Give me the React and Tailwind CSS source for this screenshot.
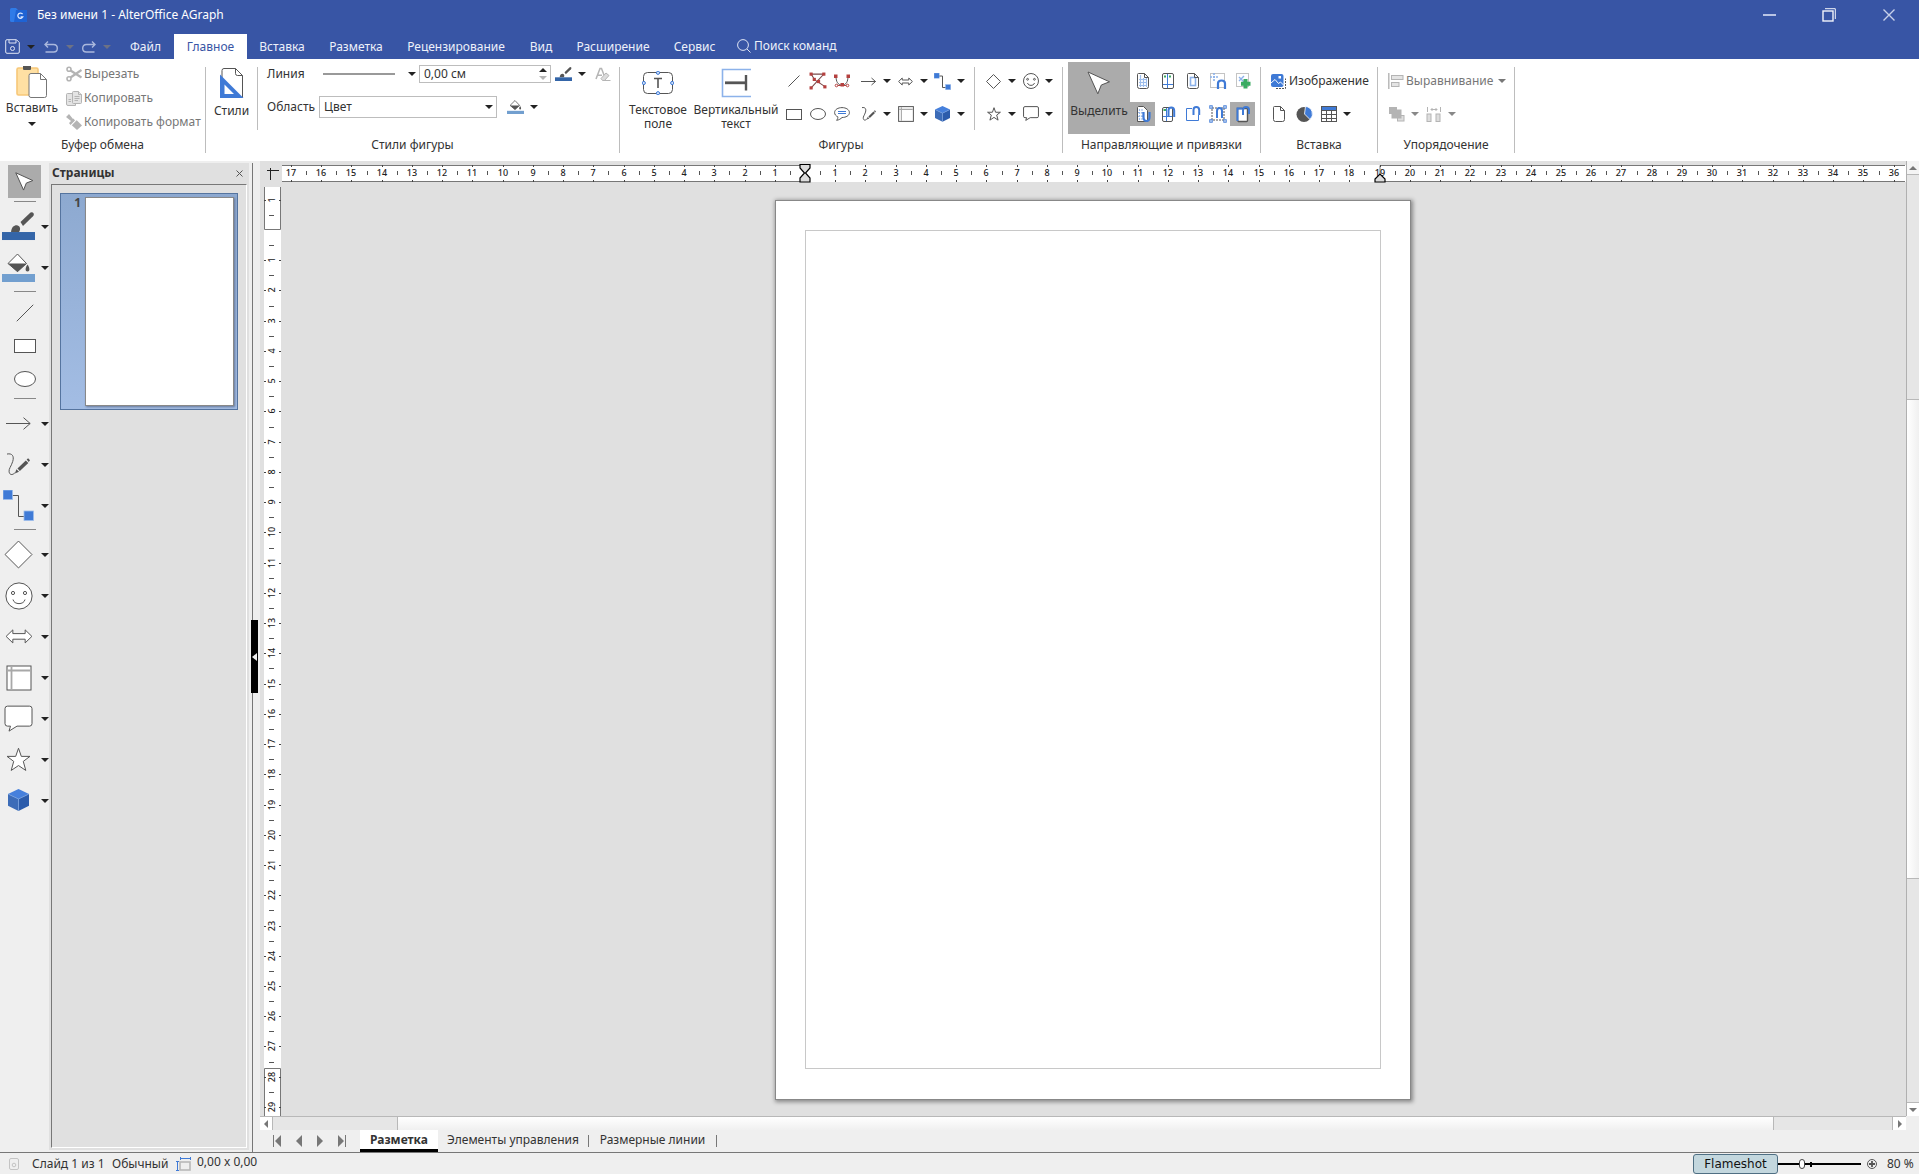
import React from "react";

const D = "#555555";
const B = "#3f7ad6";
const R = "#b5403f";

/* ---------- small helpers ---------- */

function Svg({ w = 18, h = w, vb, children }) {
  return (
    <svg
      width={w}
      height={h}
      viewBox={vb || `0 0 ${w} ${h}`}
      fill="none"
      stroke={D}
      strokeWidth="1"
      className="block shrink-0"
      aria-hidden="true"
    >
      {children}
    </svg>
  );
}

function Caret({ tone = "#222222" }) {
  return (
    <Svg w={8} h={4}>
      <path d="M0 0H8L4 4Z" fill={tone} stroke="none" />
    </Svg>
  );
}

function Drop({ label, tone, className = "w-2 h-6" }) {
  return (
    <button type="button" aria-label={label} className={`flex items-center justify-center shrink-0 ${className}`}>
      <Caret tone={tone} />
    </button>
  );
}

function IconBtn({ label, className = "w-6 h-6", children }) {
  return (
    <button type="button" aria-label={label} className={`flex items-center justify-center shrink-0 ${className}`}>
      {children}
    </button>
  );
}

function Split({ label, children, tone }) {
  return (
    <div className="flex w-[37px] items-center">
      <IconBtn label={label} className="h-6 w-[29px]">{children}</IconBtn>
      <Drop label={`${label}: ещё`} tone={tone} />
    </div>
  );
}

/* ---------- icons ---------- */

const LineIcon = ({ s = 12 }) => (
  <Svg w={s} vb="0 0 12 12"><path d="M.5 11.5 11.5.5" strokeWidth={12 / s} /></Svg>
);
const Polygon = () => (
  <Svg w={18} vb="1 1 17 17">
    <path d="M3 3H15L3 16M3 3 6.5 8.5 16.5 15" stroke="#7a4a4a" />
    {[[3, 3], [15, 3], [6, 8], [10, 10], [3, 16], [16, 15]].map(([x, y]) => (
      <rect key={`${x}-${y}`} x={x - 1.5} y={y - 1.5} width="3" height="3" fill={R} stroke="none" />
    ))}
  </Svg>
);
const Curve = () => (
  <Svg w={18}>
    <path d="M3 4C3 10 5 13 9 13S15 10 15 4" />
    <path d="M4 13.5H14" stroke={R} />
    <g fill={R} stroke="none">
      <rect x="1" y="2.5" width="3.5" height="3.5" />
      <rect x="13.5" y="2.5" width="3.5" height="3.5" />
      <rect x="7.5" y="11" width="3.5" height="3.5" />
    </g>
    <circle cx="3.5" cy="13.5" r="1.3" fill="#fff" stroke={R} />
    <circle cx="14.5" cy="13.5" r="1.3" fill="#fff" stroke={R} />
  </Svg>
);
const Arrow = ({ s = 15 }) => (
  <Svg w={s} h={s * 0.6} vb="0 0 15 9"><path d="M0 4.5H14.5M10.5 1 14.5 4.5 10.5 8" strokeWidth={15 / s} /></Svg>
);
const DoubleArrow = ({ s = 15 }) => (
  <Svg w={s} h={s * 0.6} vb="0 0 15 9">
    <path d="M.6 4.5 4.2 1V3H10.8V1L14.4 4.5 10.8 8V6H4.2V8Z" fill="#fff" strokeWidth={15 / s} />
  </Svg>
);
const Connector = ({ s = 17 }) => (
  <Svg w={s} vb="0 0 31 31">
    <path d="M6 5.5H15.5V26.5H24" strokeWidth={31 / s} />
    <rect x="0" y="0" width="9.5" height="9.5" fill={B} stroke="#9dbdec" strokeWidth=".8" />
    <rect x="21" y="21" width="9.5" height="9.5" fill={B} stroke="#9dbdec" strokeWidth=".8" />
  </Svg>
);
const Rect = ({ w = 16, h = 11 }) => (
  <Svg w={w} h={h}><rect x=".5" y=".5" width={w - 1} height={h - 1} fill="#fff" /></Svg>
);
const Ellipse = ({ w = 16, h = 12 }) => (
  <Svg w={w} h={h}><ellipse cx={w / 2} cy={h / 2} rx={w / 2 - 0.5} ry={h / 2 - 0.5} fill="#fff" /></Svg>
);
const Bubble = () => (
  <Svg w={16} h={14}>
    <path d="M8 .6C12 .6 15.4 2.6 15.4 5.6S12 10.5 8 10.5C6.8 11.8 5 13 2.6 13.3 3.6 12 4 11 3.8 9.8 1.8 8.9.6 7.4.6 5.6.6 2.6 4 .6 8 .6Z" />
    <path d="M4 4.5H12M4 6.5H12" stroke={B} />
  </Svg>
);
const FreePen = ({ s = 14 }) => (
  <Svg w={s} h={s} vb="0 0 22 22">
    <path d="M0 1C5 0 7 3 5.5 8 4 13 1.5 15 2 18 2.5 21 5 21.5 7.5 19" strokeWidth={22 / s} />
    <path d="M7.5 19.5 9 15.5 11.5 18ZM10 14.8 18 7.2 20.4 9.5 12.3 17.2ZM18.8 6.2 20.2 5 22 7 20.8 8.6Z" fill={D} stroke="none" />
  </Svg>
);
const TableFrame = ({ s = 16 }) => (
  <Svg w={s} vb="0 0 26 26">
    <rect x="1" y="1" width="24" height="24" fill="#fff" strokeWidth={26 / s} />
    <path d="M5.5 2V24M2 5.5H24" stroke="#a8a8a8" strokeWidth="1.8" />
  </Svg>
);
const Cube = ({ s = 15 }) => (
  <Svg w={s} h={s * 1.05} vb="0 0 20 21">
    <g stroke="none">
      <path d="M10 0 20 4.8 10 9.5 0 4.8Z" fill="#4680dc" />
      <path d="M0 4.8 10 9.5V21L0 16Z" fill="#3c6cb8" />
      <path d="M20 4.8 10 9.5V21L20 16Z" fill="#2c5cab" />
    </g>
    <path d="M.5 5 10 9.5 19.5 5M10 9.5V20.5" stroke="#7ba5e4" strokeWidth=".7" />
  </Svg>
);
const Diamond = ({ s = 15 }) => (
  <Svg w={s} vb="0 0 28 28"><path d="M14 1 27 14 14 27 1 14Z" fill="#fff" strokeWidth={28 / s} /></Svg>
);
const Smile = ({ s = 16 }) => (
  <Svg w={s} vb="0 0 28 28">
    <g strokeWidth={28 / s}>
      <circle cx="14" cy="14" r="13.1" fill="#fff" />
      <circle cx="8" cy="11" r="1.6" />
      <circle cx="20" cy="11" r="1.6" />
      <path d="M8 17.5C9 23 19 23 20 17.5" />
    </g>
  </Svg>
);
const Star = ({ s = 14 }) => (
  <Svg w={s} vb="0 0 24 24">
    <path d="M12 1.2 14.7 9H23L16.6 13.8 19 22.5 12 17.8 5 22.5 7.4 13.8 1 9H9.3Z" fill="#fff" strokeWidth={24 / s} />
  </Svg>
);
const Callout = ({ s = 16 }) => (
  <Svg w={s} h={s * 0.94} vb="0 0 29 27">
    <path d="M3.5 1H25.5Q28 1 28 3.5V18.5Q28 21 25.5 21H13L5 26 6.5 21H3.5Q1 21 1 18.5V3.5Q1 1 3.5 1Z" fill="#fff" strokeWidth={29 / s} />
  </Svg>
);
const Cursor = ({ s = 24 }) => (
  <Svg w={s} vb="0 0 24 24"><path d="M1 1 22.5 10.8 14.3 14 10.8 22.8Z" fill="#fff" strokeWidth={24 / s} /></Svg>
);
const Brush = ({ s = 33 }) => (
  <Svg w={s} h={s * 0.85} vb="0 0 33 28">
    <g stroke="none">
      <path d="M18.5 10 28.5.5Q30.5-.5 31.5 1.2 32.3 2.8 31 4.2L21 14Z" fill={D} />
      <path d="M9 20C9.5 15 12 13 15 13.2 18.5 14 18.8 17.5 17 20Z" fill={D} />
      <rect y="20" width="33" height="8" fill="#3465a8" />
    </g>
  </Svg>
);
const Bucket = ({ s = 33 }) => (
  <Svg w={s} h={s * 0.88} vb="0 0 33 29">
    <path d="M6 10.5 15.5 1 24.5 10.5 15.5 18.5Z" fill="#fff" strokeWidth={Math.min(33 / s, 1.5)} />
    <path d="M6 10.5H24.5L15.5 19Z" fill={D} stroke="none" />
    <path d="M25.5 11.5C28 15 28 18.5 25.5 18.5S23 15 25.5 11.5Z" fill={D} stroke="none" />
    <rect y="21" width="33" height="8" fill="#729fcf" stroke="none" />
  </Svg>
);
const Eraser = () => (
  <Svg w={16} h={15} vb="0 0 16 15">
    <path d="M1 12 5 1.5H6.5L9 8M2.5 8.2H7" stroke="#b5b5b5" strokeWidth="1.5" />
    <path d="M6 11.5 11 6 14 8.5 9.5 13.5H7.5ZM9 13.5H15.5" stroke="#b5b5b5" fill="#dcdcdc" />
  </Svg>
);

/* page-shaped glyphs */
const Sheet = ({ children }) => (
  <Svg w={18} h={18}>
    <path d="M4.5 1.5H10.5L14.5 5.5V14.5Q14.5 16.5 12.5 16.5H5.5Q3.5 16.5 3.5 14.5V2.5Q3.5 1.5 4.5 1.5Z" fill="#fff" />
    {children}
    <path d="M10.5 1.5V5.5H14.5" />
  </Svg>
);
const GridIcon = () => (
  <Sheet><path d="M5 7.5H13M5 10.5H13M5 13.5H13M6.5 3V15M9.5 6V15M12.5 6V15" stroke="#9dbdec" strokeWidth="1.2" /></Sheet>
);
const GuideIcon = () => (
  <Svg w={18}>
    <rect x="3.5" y="1.5" width="11" height="15" rx="1.5" fill="#fff" />
    <path d="M8.5 2V16M4 12.5H14" stroke={B} />
    <path d="M5 4.5H7M10 4.5H12" stroke="#3cab63" strokeWidth="2" />
  </Svg>
);
const FrameIcon = () => (
  <Sheet><rect x="6.5" y="5.5" width="5" height="8" stroke="#8cb2ea" strokeWidth="1.6" /></Sheet>
);
const SnapMove = () => (
  <Svg w={18}>
    <rect x="1.5" y="1.5" width="14" height="14" stroke="#c4c4c4" fill="#fff" />
    <path d="M5 1V9M1 5H9" stroke="#8cb2ea" strokeWidth="1.6" strokeDasharray="2 1" />
    <path d="M9 17V11.5Q9 8.5 12.5 8.5T16 11.5V17" stroke={B} strokeWidth="2.2" />
  </Svg>
);
const AddSnap = () => (
  <Svg w={18}>
    <rect x="2.5" y="1.5" width="12" height="13" stroke="#c4c4c4" fill="#fff" />
    <path d="M5 5 10 10M10 4 5 9" stroke="#8cb2ea" strokeWidth="1.4" />
    <path d="M11.5 7V16.5M7 11.8H16.5" stroke="#3cab63" strokeWidth="4" />
  </Svg>
);
const SnapGrid = () => (
  <Svg w={18}>
    <path d="M4.5 1.5H9.5L13.5 5.5V16.5H3.5V2.5Z" fill="#fff" />
    <path d="M5.5 4V15M8 4V15M4 7.5H10M4 11.5H9" stroke="#9dbdec" strokeWidth="1.2" strokeDasharray="2 1" />
    <path d="M9.5 7V12Q9.5 16 12.5 16T15.5 12V7" stroke={B} strokeWidth="2.2" />
  </Svg>
);
const SnapGuide = () => (
  <Svg w={18}>
    <rect x="3.5" y="2.5" width="10" height="14" rx="1.5" fill="#fff" />
    <path d="M7.5 3V16M4 11.5H13" stroke={B} />
    <path d="M4.5 5H7" stroke="#3cab63" strokeWidth="2" />
    <path d="M9.5 12V5.5Q9.5 2.5 12.3 2.5T15.2 5.5V12" stroke={B} strokeWidth="2" />
  </Svg>
);
const SnapCorner = () => (
  <Svg w={18}>
    <path d="M8 3.5H2.5V15.5H14.5V10" stroke={B} />
    <path d="M9.5 10V5Q9.5 2 12.3 2T15.2 5V10" stroke={B} strokeWidth="2" />
  </Svg>
);
const SnapPoints = () => (
  <Svg w={18}>
    <rect x="3" y="3" width="12" height="12" stroke={D} strokeDasharray="2 1" />
    {[[2, 2], [16, 2], [2, 16], [16, 16]].map(([x, y]) => (
      <rect key={`${x}-${y}`} x={x - 1.2} y={y - 1.2} width="2.4" height="2.4" fill="#fff" stroke={B} />
    ))}
    <path d="M8 13V6Q8 3 10.5 3T13 6V13" stroke={B} strokeWidth="2" />
  </Svg>
);
const SnapPage = () => (
  <Svg w={18}>
    <path d="M3.5 3.5H13.5V15.5Q13.5 16.5 12.5 16.5H4.5L3.5 15.5Z" fill="#fff" strokeWidth="1.4" />
    <path d="M3.5 16V3.5H8M9 10V5Q9 2 12 2T15 5V9" stroke={B} strokeWidth="2" />
  </Svg>
);

const PasteIcon = () => (
  <Svg w={32} h={34}>
    <rect x="1" y="3" width="21" height="27" rx="1.5" fill="#ffe0a3" stroke="#f7c778" strokeWidth="1.6" />
    <path d="M7 1H15V4Q15 5 14 5H8Q7 5 7 4Z" fill={D} stroke="none" />
    <path d="M15 8.5H24.5L30.5 14.5V30.5Q30.5 32.5 28.5 32.5H15Q13 32.5 13 30.5V10.5Q13 8.5 15 8.5Z" fill="#fff" stroke="#777" />
    <path d="M24.5 8.5V14.5H30.5" stroke="#777" />
  </Svg>
);
const CutIcon = () => (
  <Svg w={16}>
    <g stroke="#b4b4b4" strokeWidth="1.6">
      <circle cx="3" cy="3.2" r="2" /><circle cx="3" cy="12.8" r="2" />
      <path d="M4.5 4.5 15.5 11.5M4.5 11.5 15.5 4" strokeWidth="2.2" />
    </g>
  </Svg>
);
const CopyIcon = () => (
  <Svg w={16}>
    <g stroke="#b4b4b4" fill="#e4e4e4">
      <path d="M1.5 3.5H7L9.5 6V15.5H2Q.5 15.5.5 14V4.5Q.5 3.5 1.5 3.5Z" />
      <path d="M7.5 1.5H12.5L15.5 4.5V12.5Q15.5 13.5 14.5 13.5H7.5Q6.5 13.5 6.5 12.5V2.5Q6.5 1.5 7.5 1.5Z" />
      <path d="M8.5 6.5H13.5M8.5 8.5H13.5M8.5 10.5H12M2.5 9.5H5M2.5 11.5H5M12.5 1.5V4.5H15.5" />
    </g>
  </Svg>
);
const CloneIcon = () => (
  <Svg w={16}>
    <g fill="#b4b4b4" stroke="none">
      <path d="M0 3 3 0 7 5 5 7ZM7.5 4.5 9 6.5 4.5 11 3 9Z" />
      <path d="M5.5 11 10.5 6 16 11.5 11 16Z" />
    </g>
    <path d="M5 11.5 10.5 5.8" stroke="#fff" />
  </Svg>
);
const StylesIcon = () => (
  <Svg w={24} h={32}>
    <path d="M4 1.5H15.5L22.5 8.5V30.5H2V3.5Q2 1.5 4 1.5Z" fill="#fff" stroke={D} />
    <path d="M15.5 1.5V6.5Q15.5 8.5 17.5 8.5H22.5" />
    <path d="M0 7.5 23.5 31H0ZM4.5 17.5V27H14Z" fill={B} fillRule="evenodd" stroke="none" />
  </Svg>
);
const TextBoxIcon = () => (
  <Svg w={32} h={24}>
    <rect x="1.5" y="1.5" width="29" height="21" rx="4" fill="#fff" />
    <path d="M12 7.5H20M16 7.5V17" strokeWidth="1.6" />
    {[[16, 1.8], [16, 22.2], [1.8, 12], [30.2, 12]].map(([x, y]) => (
      <circle key={`${x}-${y}`} cx={x} cy={y} r="1.6" fill="#cfe0f8" stroke={B} />
    ))}
  </Svg>
);
const VerticalTextIcon = () => (
  <Svg w={30} h={30}>
    <path d="M30 1.5H1.5V28.5H30" stroke="#8cb2ea" strokeWidth="1.6" />
    <path d="M4 14.8H25" strokeWidth="2.8" />
    <path d="M25 7V22.5" strokeWidth="2.4" />
  </Svg>
);
const ImageIcon = () => (
  <Svg w={17} h={17}>
    <path d="M6 15.5H15.5V5.5" stroke={D} strokeDasharray="2 1" />
    <rect x="1" y="1" width="12.5" height="13" rx="2" fill={B} stroke="none" />
    <path d="M1 10 5 6.5 8.5 10.5 10.5 9 13.5 12" stroke="#fff" />
    <rect x="8.5" y="3" width="2.5" height="2.5" fill="#fff" stroke="none" />
  </Svg>
);
const PieIcon = () => (
  <Svg w={17} h={17}>
    <circle cx="8" cy="8.5" r="7.5" fill={D} stroke="none" />
    <path d="M8.5 8 9.5.5A7.5 7.5 0 0 1 14 13.5Z" fill={B} stroke="#fff" strokeWidth=".8" />
  </Svg>
);
const TableIcon = () => (
  <Svg w={17} h={17}>
    <rect x=".5" y=".5" width="15" height="15" fill="#fff" />
    <rect x="1" y="1" width="14" height="3" fill={B} stroke="none" />
    <path d="M.5 4.5H15.5M.5 8.5H15.5M.5 12.5H15.5M5.5 4.5V15.5M10.5 4.5V15.5" />
  </Svg>
);
const AlignIcon = () => (
  <Svg w={16} h={16}>
    <path d="M.8 0V16" stroke="#b4b4b4" strokeWidth="1.4" />
    <rect x="3.5" y="2.5" width="11.5" height="4" fill="#e4e4e4" stroke="#b4b4b4" />
    <rect x="3.5" y="9.5" width="7.5" height="4" fill="#e4e4e4" stroke="#b4b4b4" />
  </Svg>
);
const ArrangeIcon = () => (
  <Svg w={16} h={15}>
    <g stroke="#b4b4b4" fill="#dedede">
      <rect x=".5" y=".5" width="7" height="6" fill="#b4b4b4" />
      <rect x="8.5" y="8.5" width="6.5" height="5.5" />
      <rect x="3" y="3" width="9" height="8" fill="#b4b4b4" />
    </g>
  </Svg>
);
const DistributeIcon = () => (
  <Svg w={16} h={15}>
    <path d="M1.5 0V5M14.5 0V5M5 2.5H11M6.5 1 5 2.5 6.5 4M9.5 1 11 2.5 9.5 4" stroke="#b4b4b4" />
    <rect x="1" y="7" width="4" height="7.5" fill="#dedede" stroke="#b4b4b4" />
    <rect x="10" y="7" width="4" height="7.5" fill="#dedede" stroke="#b4b4b4" />
  </Svg>
);

/* ---------- title and menu ---------- */

const MENU = [
  ["Файл", "w-[57px]"],
  ["Главное", "w-[73px]"],
  ["Вставка", "w-[70px]"],
  ["Разметка", "w-[78px]"],
  ["Рецензирование", "w-[122px]"],
  ["Вид", "w-[48px]"],
  ["Расширение", "w-[96px]"],
  ["Сервис", "w-[67px]"],
];

function TitleBar() {
  return (
    <div className="flex h-[34px] items-center bg-[#3855a5] pb-1 text-white">
      <svg width="17" height="14" viewBox="0 0 17 14" className="ml-[10px]" aria-hidden="true">
        <path d="M0 1.5Q0 0 1.5 0H6L8 2H15.5Q17 2 17 3.5V12.5Q17 14 15.5 14H1.5Q0 14 0 12.5Z" fill="#2f7be8" />
        <path d="M6 2H17V12.5Q17 14 15.5 14H4Z" fill="#1e63d4" />
        <path d="M12.6 6.2A2.6 2.6 0 1 0 12.7 9H10.6" fill="none" stroke="#d8e6ff" strokeWidth="1.3" />
      </svg>
      <span className="ml-[10px] text-xs">Без имени 1 - AlterOffice AGraph</span>
      <div className="ml-auto flex items-center">
        <IconBtn label="Свернуть" className="h-7 w-[60px]">
          <svg width="13" height="2" aria-hidden="true"><path d="M0 1H13" stroke="#b9c4e4" strokeWidth="2" /></svg>
        </IconBtn>
        <IconBtn label="Восстановить" className="h-7 w-[60px]">
          <svg width="14" height="14" fill="none" stroke="#f2f4fb" aria-hidden="true">
            <rect x="1" y="3" width="10" height="10" strokeWidth="1.4" /><path d="M3 .7H13.3V11" />
          </svg>
        </IconBtn>
        <IconBtn label="Закрыть" className="h-7 w-[60px]">
          <svg width="12" height="12" stroke="#c8d1ea" strokeWidth="1.4" aria-hidden="true"><path d="M.5.5 11.5 11.5M11.5.5.5 11.5" /></svg>
        </IconBtn>
      </div>
    </div>
  );
}

function MenuBar() {
  return (
    <nav className="flex h-[25px] items-center bg-[#3855a5] text-xs text-[#eef1fa]">
      <IconBtn label="Сохранить" className="ml-1 h-6 w-[17px]">
        <Svg w={15} h={15}>
          <g stroke="#dfe4f4">
            <path d="M2 .7H11.5L14.3 3.5V13Q14.3 14.3 13 14.3H2Q.7 14.3.7 13V2Q.7.7 2 .7Z" />
            <path d="M4 1V4H11V1" /><circle cx="7.5" cy="9.5" r="2" />
          </g>
        </Svg>
      </IconBtn>
      <Drop label="Сохранить: ещё" className="h-6 w-[19px]" />
      <IconBtn label="Отменить" className="h-6 w-[22px]">
        <Svg w={14} h={12}><path d="M4 .5 1 3.5 4 6.5M1 3.5H9.5Q13.3 3.5 13.3 7.3T9.5 11H1.5" stroke="#aab8dd" strokeWidth="1.4" /></Svg>
      </IconBtn>
      <Drop label="Отменить: ещё" tone="#6d7285" className="h-6 w-[15px]" />
      <IconBtn label="Вернуть" className="h-6 w-[23px]">
        <Svg w={14} h={12}><path d="M10 .5 13 3.5 10 6.5M13 3.5H4.5Q.7 3.5.7 7.3T4.5 11H12.5" stroke="#aab8dd" strokeWidth="1.4" /></Svg>
      </IconBtn>
      <Drop label="Вернуть: ещё" tone="#6d7285" className="h-6 w-[14px]" />
      <div className="ml-[3px] flex h-full">
        {MENU.map(([name, w]) => (
          <button
            key={name}
            type="button"
            className={`h-full whitespace-nowrap text-center ${w} ${name === "Главное" ? "bg-white text-[#3855a5]" : ""}`}
          >
            {name}
          </button>
        ))}
      </div>
      <button type="button" className="ml-[9px] flex items-center gap-[3px] pb-[2px]">
        <Svg w={14} h={14}><circle cx="6" cy="6" r="5.4" stroke="#dfe4f4" /><path d="M10 10 13.5 13.5" stroke="#dfe4f4" /></Svg>
        Поиск команд
      </button>
    </nav>
  );
}

/* ---------- ribbon ---------- */

function Group({ title, className, children }) {
  return (
    <section className={`flex shrink-0 flex-col ${className}`}>
      <div className="flex h-[75px]">{children}</div>
      <h2 className="text-center text-xs leading-[22px]">{title}</h2>
    </section>
  );
}
const Rule = () => <div className="mb-2 mt-2 w-px shrink-0 bg-[#bdbdbd]" />;
const ShortRule = () => <div className="mb-1 mt-2 w-px shrink-0 bg-[#bdbdbd]" />;
const Rows = ({ className = "", children }) => <div className={`flex flex-col gap-px pt-1.5 ${className}`}>{children}</div>;
const Row = ({ className = "", children }) => <div className={`flex h-8 items-center ${className}`}>{children}</div>;

function Ribbon() {
  return (
    <div className="flex h-[102px] bg-white text-xs leading-[14px] text-[#333333]">
      <Group title="Буфер обмена" className="w-[205px]">
        <button type="button" className="flex w-[64px] shrink-0 flex-col items-center pt-1.5 leading-[14px]">
          <PasteIcon />
          <span className="mt-[2px]">Вставить</span>
          <span className="mt-[7px]"><Caret /></span>
        </button>
        <div className="flex flex-col pl-[2px] pt-[3px] text-[#777777]">
          {[["Вырезать", CutIcon], ["Копировать", CopyIcon], ["Копировать формат", CloneIcon]].map(([t, I]) => (
            <button key={t} type="button" className="flex h-6 items-center gap-[2px] whitespace-nowrap"><I />{t}</button>
          ))}
        </div>
      </Group>
      <Rule />
      <Group title="Стили фигуры" className="w-[413px]">
        <button type="button" className="flex w-[51px] shrink-0 flex-col items-center pt-2">
          <StylesIcon />
          <span className="mt-[5px]">Стили</span>
        </button>
        <ShortRule />
        <div className="flex flex-col pl-[9px]">
          <div className="flex h-[30px] items-center">
            <span className="w-14">Линия</span>
            <button type="button" aria-label="Стиль линии" className="flex h-5 items-center">
              <span className="h-[2px] w-[72px] bg-[#999999]" />
              <span className="ml-[13px]"><Caret /></span>
            </button>
            <div className="ml-[3px] flex h-[18px] w-[132px] items-center border border-[#bdbdbd]">
              <input aria-label="Толщина линии" defaultValue="0,00 см" className="w-full min-w-0 bg-transparent pl-1 outline-none" />
              <div className="flex w-4 flex-col items-center gap-1">
                <button type="button" aria-label="Увеличить" className="rotate-180"><Caret /></button>
                <button type="button" aria-label="Уменьшить"><Caret tone="#b5b5b5" /></button>
              </div>
            </div>
            <IconBtn label="Цвет линии" className="ml-1 h-6 w-[17px]"><Brush s={17} /></IconBtn>
            <Drop label="Цвет линии: ещё" className="h-6 w-5" />
            <IconBtn label="Очистить формат" className="h-6 w-[22px]"><Eraser /></IconBtn>
          </div>
          <div className="mt-[7px] flex h-[22px] items-center">
            <label htmlFor="area" className="w-[52px]">Область</label>
            <div className="relative w-[178px]">
              <select id="area" className="h-[22px] w-full appearance-none border border-[#bdbdbd] bg-white pl-1 outline-none">
                <option>Цвет</option>
              </select>
              <span className="pointer-events-none absolute right-1 top-[9px]"><Caret /></span>
            </div>
            <IconBtn label="Цвет заливки" className="ml-[10px] h-6 w-[17px]"><Bucket s={17} /></IconBtn>
            <Drop label="Цвет заливки: ещё" className="h-6 w-5" />
          </div>
        </div>
      </Group>
      <Rule />
      <Group title="Фигуры" className="w-[442px]">
        <button type="button" className="flex w-[76px] shrink-0 flex-col items-center pt-3">
          <TextBoxIcon />
          <span className="mt-2">Текстовое</span>
          <span>поле</span>
        </button>
        <button type="button" className="flex w-20 shrink-0 flex-col items-center pt-[9px]">
          <VerticalTextIcon />
          <span className="mt-[5px]">Вертикальный</span>
          <span>текст</span>
        </button>
        <Rows className="ml-1.5">
          <Row>
            <IconBtn label="Линия"><LineIcon /></IconBtn>
            <IconBtn label="Многоугольник"><Polygon /></IconBtn>
            <IconBtn label="Кривая"><Curve /></IconBtn>
            <Split label="Стрелка"><Arrow /></Split>
            <Split label="Блочные стрелки"><DoubleArrow /></Split>
            <Split label="Соединитель"><Connector /></Split>
          </Row>
          <Row>
            <IconBtn label="Прямоугольник"><Rect /></IconBtn>
            <IconBtn label="Эллипс"><Ellipse /></IconBtn>
            <IconBtn label="Комментарий"><Bubble /></IconBtn>
            <Split label="Кривые"><FreePen /></Split>
            <Split label="Блок-схема"><TableFrame /></Split>
            <Split label="Объёмные фигуры"><Cube /></Split>
          </Row>
        </Rows>
        <div className="ml-[9px] flex"><ShortRule /></div>
        <Rows className="ml-1">
          <Row>
            <Split label="Основные фигуры"><Diamond /></Split>
            <Split label="Символы"><Smile /></Split>
          </Row>
          <Row>
            <Split label="Звёзды"><Star /></Split>
            <Split label="Выноски"><Callout /></Split>
          </Row>
        </Rows>
      </Group>
      <Rule />
      <Group title="Направляющие и привязки" className="w-[197px]">
        <button type="button" className="ml-[5px] mt-[3px] flex h-[72px] w-[62px] shrink-0 flex-col items-center bg-[#ababab] pt-[9px]">
          <Cursor />
          <span className="mt-[9px]">Выделить</span>
        </button>
        <Rows>
          <Row>
            {[["Сетка", GridIcon], ["Направляющие", GuideIcon], ["Поля", FrameIcon], ["Привязка при перемещении", SnapMove], ["Добавить", AddSnap]].map(([l, I]) => (
              <IconBtn key={l} label={l} className="h-6 w-[25px]"><I /></IconBtn>
            ))}
          </Row>
          <Row>
            <IconBtn label="Привязать к сетке" className="h-6 w-[25px] bg-[#ababab]"><SnapGrid /></IconBtn>
            <IconBtn label="Привязать к направляющим" className="h-6 w-[25px]"><SnapGuide /></IconBtn>
            <IconBtn label="Привязать к рамке" className="h-6 w-[25px]"><SnapCorner /></IconBtn>
            <IconBtn label="Привязать к точкам" className="h-6 w-[25px]"><SnapPoints /></IconBtn>
            <IconBtn label="Привязать к полям" className="h-6 w-[25px] bg-[#ababab]"><SnapPage /></IconBtn>
          </Row>
        </Rows>
      </Group>
      <Rule />
      <Group title="Вставка" className="w-[116px]">
        <Rows className="pl-[9px]">
          <Row>
            <button type="button" className="flex items-center gap-[2px]"><ImageIcon />Изображение</button>
          </Row>
          <Row>
            <IconBtn label="Страница" className="h-6 w-[18px]"><Sheet /></IconBtn>
            <IconBtn label="Диаграмма" className="ml-[7px] h-6 w-[18px]"><PieIcon /></IconBtn>
            <IconBtn label="Таблица" className="ml-[7px] h-6 w-[18px]"><TableIcon /></IconBtn>
            <Drop label="Таблица: ещё" className="ml-[5px] h-6 w-2" />
          </Row>
        </Rows>
      </Group>
      <Rule />
      <Group title="Упорядочение" className="w-[136px]">
        <Rows className="pl-[10px] text-[#777777]">
          <Row>
            <button type="button" className="flex w-[103px] items-center gap-[2px]"><AlignIcon />Выравнивание</button>
            <Drop label="Выравнивание: ещё" tone="#777777" className="ml-[7px] h-6 w-2" />
          </Row>
          <Row className="-ml-1.5">
            <Split label="Порядок" tone="#888888"><ArrangeIcon /></Split>
            <Split label="Распределить" tone="#888888"><DistributeIcon /></Split>
          </Row>
        </Rows>
      </Group>
      <Rule />
    </div>
  );
}

/* ---------- left toolbar ---------- */

const Sep = () => <div className="ml-[14px] h-2 pt-[3px]"><div className="h-px w-[22px] bg-[#888888]" /></div>;

function Tool({ label, drop, children }) {
  return drop ? (
    <div className="flex h-[41px] items-center">
      <IconBtn label={label} className="ml-[2px] h-9 w-[33px]">{children}</IconBtn>
      <Drop label={`${label}: ещё`} className="ml-[6px] h-9 w-2" />
    </div>
  ) : (
    <IconBtn label={label} className="ml-2 h-[33px] w-[34px]">{children}</IconBtn>
  );
}

function Toolbar() {
  return (
    <div className="flex w-[49px] shrink-0 flex-col bg-[#efefef] pt-1">
      <IconBtn label="Выделить" className="ml-2 h-[33px] w-[33px] bg-[#ababab]"><Cursor s={19} /></IconBtn>
      <Sep />
      <Tool label="Цвет линии" drop><Brush /></Tool>
      <Tool label="Цвет заливки" drop><Bucket /></Tool>
      <Sep />
      <Tool label="Линия"><LineIcon s={18} /></Tool>
      <Tool label="Прямоугольник"><Rect w={22} h={14} /></Tool>
      <Tool label="Эллипс"><Ellipse w={22} h={16} /></Tool>
      <Sep />
      <Tool label="Стрелка" drop><Arrow s={25} /></Tool>
      <Tool label="Кривая" drop><FreePen s={23} /></Tool>
      <Tool label="Соединитель" drop><Connector s={31} /></Tool>
      <Sep />
      <Tool label="Основные фигуры" drop><Diamond s={29} /></Tool>
      <Tool label="Символы" drop><Smile s={28} /></Tool>
      <Tool label="Блочные стрелки" drop><DoubleArrow s={28} /></Tool>
      <Tool label="Блок-схема" drop><TableFrame s={26} /></Tool>
      <Tool label="Выноски" drop><Callout s={29} /></Tool>
      <Tool label="Звёзды" drop><Star s={25} /></Tool>
      <Tool label="Объёмные фигуры" drop><Cube s={21} /></Tool>
    </div>
  );
}

/* ---------- page panel ---------- */

function PagesPanel() {
  return (
    <aside className="mb-0.5 mt-0.5 flex w-[200px] shrink-0 flex-col bg-[#e0e0e0] px-0.5 pb-0.5">
      <div className="flex h-[21px] items-center justify-between pb-px pl-px pr-1 text-xs font-bold text-[#333333]">
        Страницы
        <IconBtn label="Закрыть панель" className="h-4 w-[7px]">
          <Svg w={7}><path d="M.5.5 6.5 6.5M6.5.5.5 6.5" /></Svg>
        </IconBtn>
      </div>
      <div className="flex-1 border border-b-white border-l-[#777777] border-r-white border-t-[#777777] pl-2 pt-2">
        <button
          type="button"
          className="flex h-[217px] w-[178px] border border-[#55749f] bg-linear-to-b from-[#8da9d0] to-[#a3bde4] pt-[3px]"
        >
          <span className="w-6 pr-1 text-right text-xs font-bold leading-3 text-[#444444]">1</span>
          <span className="h-[209px] w-[149px] border border-[#888888] bg-white shadow-[1px_1px_2px_#667799]" />
        </button>
      </div>
    </aside>
  );
}

function Splitter() {
  return (
    <div className="relative flex w-[11px] shrink-0 items-center bg-[#efefef]">
      <div className="ml-[3px] mt-0.5 w-px self-stretch bg-[#777777]" />
      <button type="button" aria-label="Скрыть панель" className="absolute left-[2px] top-[459px] flex h-[73px] w-[7px] items-center justify-center bg-black">
        <svg width="5" height="8" aria-hidden="true"><path d="M5 0V8L0 4Z" fill="#efefef" /></svg>
      </button>
    </div>
  );
}

/* ---------- rulers ---------- */

const CM = 30.24;
const RULER_TEXT = { fontFamily: '"Noto Sans", sans-serif', fontSize: 9, fontWeight: 500, fill: "#222222", textAnchor: "middle" };

function HorizontalRuler() {
  const marks = [];
  for (let i = -17; i <= 36; i++) {
    const x = Math.round(i * CM);
    const half = Math.round((i + 0.5) * CM);
    if (i !== 0) {
      marks.push(
        <g key={i}>
          <path d={`M${x + 0.5} 0V2M${x + 0.5} 15V17`} stroke="#444444" />
          <text x={x} y="11" style={RULER_TEXT}>{Math.abs(i)}</text>
        </g>
      );
    }
    if (i < 36) marks.push(<path key={`h${i}`} d={`M${half + 0.5} 6V10`} stroke="#555555" />);
  }
  return (
    <svg width="100%" height="22" className="block overflow-hidden" aria-hidden="true">
      <rect y="4" width="100%" height="17" fill="#ffffff" />
      <svg x="50%" y="4" overflow="visible">
        <g transform="translate(-289 0)">
          <path d="M-700 .5H0M-700 16.5H0M1100 .5H575V17M1100 16.5H575" stroke="#777777" fill="none" />
          {marks}
          <g fill="#dddddd" stroke="#000000" strokeWidth="1.2">
            <path d="M-5-.5H5V3L.5 8 5 13V17H-5V13L-.5 8-5 3Z" />
            <path d="M570 17V14L575 9 580 14V17Z" />
          </g>
        </g>
      </svg>
    </svg>
  );
}

function VerticalRuler() {
  const marks = [];
  for (let i = -1; i <= 29; i++) {
    const y = Math.round(i * CM);
    const half = Math.round((i + 0.5) * CM);
    if (i !== 0) {
      marks.push(
        <g key={i}>
          <path d={`M0 ${y + 0.5}H2M15 ${y + 0.5}H17`} stroke="#444444" />
          <text x="0" y="0" transform={`translate(11 ${y}) rotate(-90)`} style={RULER_TEXT}>{Math.abs(i)}</text>
        </g>
      );
    }
    if (i < 29) marks.push(<path key={`h${i}`} d={`M5 ${half + 0.5}H10`} stroke="#555555" />);
  }
  return (
    <svg width="22" height="100%" className="block shrink-0 overflow-hidden bg-[#e0e0e0]" aria-hidden="true">
      <rect x="4" y="4" width="17" height="100%" fill="#ffffff" />
      <g transform="translate(4 47)">
        <path d="M.5-43V-.5H16.5V-43M.5 900V838.5H16.5V900" stroke="#777777" fill="none" />
        {marks}
      </g>
    </svg>
  );
}

/* ---------- work area ---------- */

const Tri = ({ d, w = 4, h = 8 }) => (
  <svg width={w} height={h} aria-hidden="true"><path d={d} fill="#777777" /></svg>
);

function VerticalScroll() {
  return (
    <div className="flex w-[13px] shrink-0 flex-col border-l border-[#b0b0b0] bg-[#e6e6e6]">
      <IconBtn label="Вверх" className="h-[14px] w-full border-b border-[#b8b8b8] bg-[#f4f4f4]"><Tri w={8} h={4} d="M0 4H8L4 0Z" /></IconBtn>
      <div className="flex-[224]" />
      <div className="flex-[480] border-y border-[#b8b8b8] bg-linear-to-r from-white to-[#f0f0f0]" />
      <div className="flex-[223]" />
      <IconBtn label="Вниз" className="h-[14px] w-full border-t border-[#b8b8b8] bg-white"><Tri w={8} h={4} d="M0 0H8L4 4Z" /></IconBtn>
    </div>
  );
}

function HorizontalScroll() {
  return (
    <div className="flex h-[14px] shrink-0 border-t border-[#b8b8b8] bg-[#e6e6e6]">
      <IconBtn label="Влево" className="h-full w-[13px] border-r border-[#b8b8b8] bg-white"><Tri d="M4 0V8L0 4Z" /></IconBtn>
      <div className="flex-[124]" />
      <div className="flex-[1377] border-x border-[#b8b8b8] bg-linear-to-b from-white to-[#f0f0f0]" />
      <div className="flex-[118]" />
      <IconBtn label="Вправо" className="h-full w-[14px] border-l border-[#b8b8b8] bg-white"><Tri d="M0 0V8L4 4Z" /></IconBtn>
    </div>
  );
}

function LayerTabs() {
  return (
    <div className="flex h-[22px] shrink-0 items-center bg-[#efefef] text-xs text-[#333333]">
      <div className="ml-[10px] flex w-[90px] items-center">
        <IconBtn label="Первый" className="w-[14px]"><Tri w={8} h={12} d="M0 0H1V12H0ZM8 0V12L2 6Z" /></IconBtn>
        <IconBtn label="Предыдущий" className="ml-2 w-[14px]"><Tri w={6} h={12} d="M6 0V12L0 6Z" /></IconBtn>
        <IconBtn label="Следующий" className="ml-[7px] w-[14px]"><Tri w={6} h={12} d="M0 0V12L6 6Z" /></IconBtn>
        <IconBtn label="Последний" className="ml-2 w-[14px]"><Tri w={8} h={12} d="M8 0H7V12H8ZM0 0V12L6 6Z" /></IconBtn>
      </div>
      <button type="button" className="h-full w-[78px] border-b-[3px] border-black bg-white text-center font-bold leading-[18px]">Разметка</button>
      <button type="button" className="w-[150px] pb-0.5 text-center">Элементы управления</button>
      <div className="h-3 w-px bg-[#777777]" />
      <button type="button" className="w-[127px] pb-0.5 text-center">Размерные линии</button>
      <div className="h-3 w-px bg-[#777777]" />
    </div>
  );
}

function WorkArea() {
  return (
    <main className="flex min-w-0 flex-1 flex-col bg-[#efefef]">
      <div className="flex min-h-0 flex-1">
        <div className="flex min-w-0 flex-1 flex-col bg-[#e0e0e0]">
          <div className="flex shrink-0">
            <Svg w={22} h={22}><path d="M7 9.5H19M10.5 7V19" stroke="#222222" /></Svg>
            <div className="min-w-0 flex-1"><HorizontalRuler /></div>
          </div>
          <div className="flex min-h-0 flex-1">
            <VerticalRuler />
            <div className="flex min-w-0 flex-1 items-start justify-center overflow-hidden pr-0.5 pt-[17px]">
              <div className="h-[900px] w-[636px] shrink-0 border border-[#888888] bg-white px-[29px] pb-[30px] pt-[29px] shadow-[1px_1px_4px_1px_#888888]">
                <div className="h-full border border-[#c8c8c8]" />
              </div>
            </div>
          </div>
          <HorizontalScroll />
        </div>
        <div className="flex bg-[#efefef] pb-[14px]"><VerticalScroll /></div>
      </div>
      <LayerTabs />
    </main>
  );
}

/* ---------- status bar ---------- */

function StatusBar() {
  return (
    <footer className="relative flex h-[22px] shrink-0 items-center border-t border-[#777777] bg-[#efefef] text-xs text-[#333333]">
      <span className="ml-[9px]">
        <Svg w={10} h={12}><rect x=".5" y=".5" width="9" height="11" rx="1.5" stroke="#c4c4c4" /><circle cx="5" cy="7" r="1.8" stroke="#c4c4c4" /></Svg>
      </span>
      <span className="ml-[13px] w-20 whitespace-nowrap">Слайд 1 из 1</span>
      <span className="w-16">Обычный</span>
      <Svg w={15} h={14}>
        <path d="M4 1.5H14.5M4.5 0V3M14.5 0V3M1.5 4V13.5M0 4.5H3M0 13.5H3" stroke={B} />
        <rect x="4" y="5" width="10" height="8" stroke="#b8b8b8" strokeWidth="1.6" />
      </Svg>
      <span className="ml-1.5 pb-[3px]">0,00 x 0,00</span>
      <div className="ml-auto flex items-center pt-px">
        <div className="relative flex items-center">
          <input
            type="range"
            aria-label="Масштаб"
            min="0"
            max="100"
            defaultValue="43"
            className="h-4 w-[104px] appearance-none bg-transparent [&::-webkit-slider-runnable-track]:h-[2px] [&::-webkit-slider-runnable-track]:bg-black [&::-webkit-slider-thumb]:-mt-1 [&::-webkit-slider-thumb]:h-[10px] [&::-webkit-slider-thumb]:w-[6px] [&::-webkit-slider-thumb]:appearance-none [&::-webkit-slider-thumb]:rounded-full [&::-webkit-slider-thumb]:border [&::-webkit-slider-thumb]:border-[#444444] [&::-webkit-slider-thumb]:bg-white"
          />
          <span className="absolute left-[53px] top-[6px] h-[5px] w-[2px] bg-black" />
        </div>
        <IconBtn label="Увеличить масштаб" className="ml-[6px] h-4 w-[10px]">
          <Svg w={10}><circle cx="5" cy="5" r="4.5" /><path d="M5 2V8M2 5H8" strokeWidth="1.8" /></Svg>
        </IconBtn>
        <span className="ml-[10px] w-8 whitespace-nowrap">80 %</span>
      </div>
      <div className="absolute right-[141px] top-px flex h-5 w-[85px] items-center justify-center rounded-[3px] border border-[#4f6f83] bg-[#c3d7de] font-['DejaVu_Sans'] text-[12px] text-[#111111]">
        Flameshot
      </div>
    </footer>
  );
}

export default function App() {
  return (
    <div className="flex h-screen min-w-0 flex-col overflow-hidden bg-[#efefef] font-['Noto_Sans','Open_Sans',sans-serif]">
      <TitleBar />
      <MenuBar />
      <Ribbon />
      <div className="flex min-h-0 flex-1">
        <Toolbar />
        <PagesPanel />
        <Splitter />
        <WorkArea />
      </div>
      <StatusBar />
    </div>
  );
}
